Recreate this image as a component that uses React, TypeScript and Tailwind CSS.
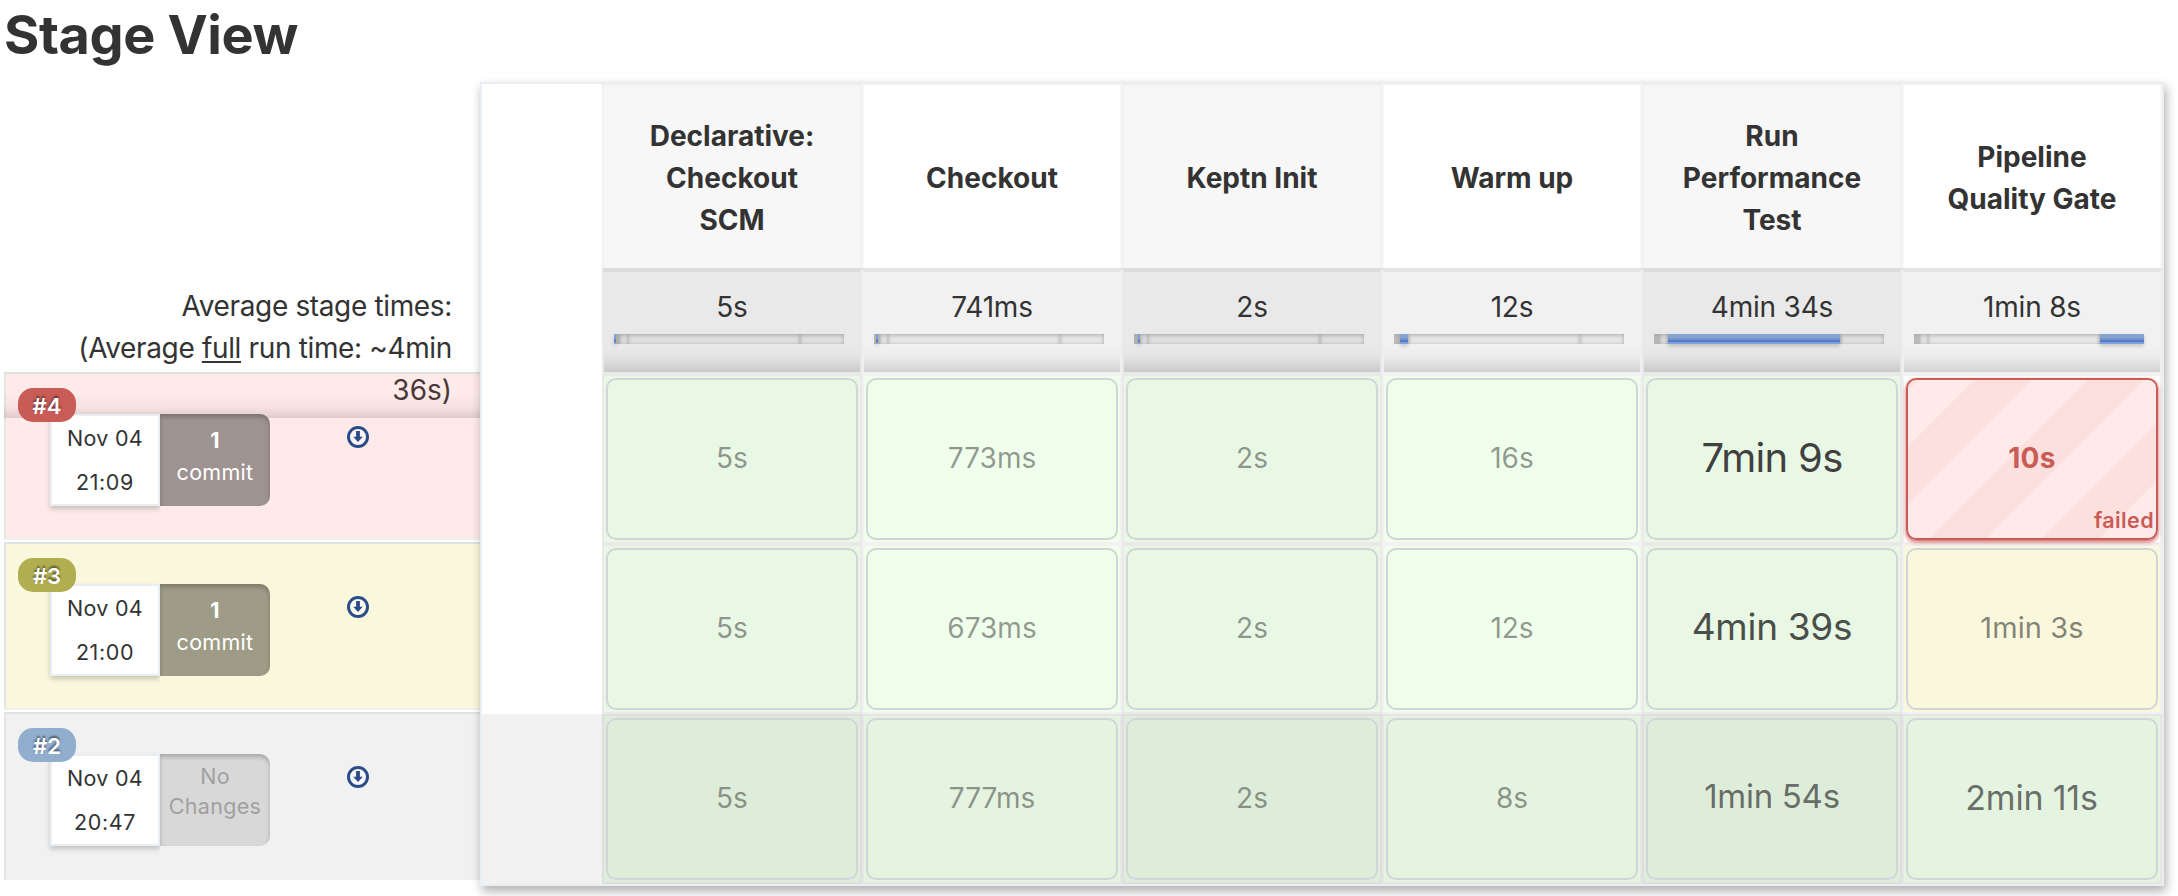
import React from "react";

type Stage = { name: string[]; avg: string; from: number; to: number };

const stages: Stage[] = [
  { name: ["Declarative:", "Checkout", "SCM"], avg: "5s", from: 0, to: 2 },
  { name: ["Checkout"], avg: "741ms", from: 2, to: 4 },
  { name: ["Keptn Init"], avg: "2s", from: 4, to: 6 },
  { name: ["Warm up"], avg: "12s", from: 6, to: 14 },
  { name: ["Run", "Performance", "Test"], avg: "4min 34s", from: 14, to: 186 },
  { name: ["Pipeline", "Quality Gate"], avg: "1min 8s", from: 186, to: 230 },
];

type Cell = { text: string; style?: string; state?: "ok" | "failed" | "unstable" };
type Run = {
  id: string;
  badge: string;
  row: string;
  date: string;
  time: string;
  commits: number;
  changes: string;
  shaded?: boolean;
  cells: Cell[];
};

const small = "text-[28px] text-[#333]/50 pb-0.5";

const runs: Run[] = [
  {
    id: "#4",
    badge: "bg-[#c95c56]",
    row: "bg-[#feebe9] border-b-[#f0f0f0]",
    date: "Nov 04",
    time: "21:09",
    commits: 1,
    changes: "bg-[#9e9390]",
    cells: [
      { text: "5s" },
      { text: "773ms" },
      { text: "2s" },
      { text: "16s" },
      { text: "7min 9s", style: "text-[40px] text-[#404040] tracking-[-0.7px] pb-0.5" },
      { text: "10s", style: "text-[28px] font-bold text-[#c95c56] tracking-[0.3px] pb-0.5", state: "failed" },
    ],
  },
  {
    id: "#3",
    badge: "bg-[#b0ae50]",
    row: "bg-[#faf8dc] border-b-[#f0f0f0]",
    date: "Nov 04",
    time: "21:00",
    commits: 1,
    changes: "bg-[#9e9c87]",
    cells: [
      { text: "5s" },
      { text: "673ms" },
      { text: "2s" },
      { text: "12s" },
      { text: "4min 39s", style: "text-[37px] text-[#4b4f4a] tracking-[-0.3px] pb-1" },
      { text: "1min 3s", style: "text-[29px] text-[#333]/60 tracking-[0.1px] pb-0.5", state: "unstable" },
    ],
  },
  {
    id: "#2",
    badge: "bg-[#91aece]",
    row: "bg-[#f1f1f1] border-b-[#f1f1f1]",
    date: "Nov 04",
    time: "20:47",
    commits: 0,
    changes: "bg-[#d8d8d8]",
    shaded: true,
    cells: [
      { text: "5s" },
      { text: "777ms" },
      { text: "2s" },
      { text: "8s" },
      { text: "1min 54s", style: "text-[33px] text-[#333]/70 tracking-[-0.3px] pb-1" },
      { text: "2min 11s", style: "text-[34px] text-[#333]/70 tracking-[-0.2px] pb-[3px] pr-px" },
    ],
  },
];

function DownloadIcon() {
  return (
    <svg width="22" height="22" viewBox="0 0 22 22" className="block">
      <circle cx="11" cy="11" r="9.5" fill="#fff" fillOpacity="0.5" stroke="#2a4d87" strokeWidth="3" />
      <path d="M9.1 5h3.8v5.8h2.9L11 16 6.2 10.8h2.9z" fill="#2a4d87" />
    </svg>
  );
}

function BuildRow({ run }: { run: Run }) {
  return (
    <div className={`mb-0.5 flex h-[168px] border-2 border-r-0 border-l-[#e4e4e4] border-t-[#e2e2e2] ${run.row}`}>
      <div
        className={`relative z-30 ml-3 mt-3.5 flex h-[34px] w-[58px] items-center justify-center rounded-[15px] pt-0.5 text-[22px] font-semibold text-white [text-shadow:0_-2px_2px_rgba(0,0,0,0.5)] ${run.badge}`}
      >
        {run.id}
      </div>
      <div className="relative z-20 -ml-[26px] mt-10 flex h-[92px] w-[110px] flex-col items-center justify-center border-2 border-[#e8eef1] bg-white text-[21.5px] leading-[44px] tracking-[0.3px] text-[#333] shadow-[0_3px_5px_rgba(0,0,0,0.2)] [clip-path:inset(-4px_0_-12px_-10px)]">
        <div>{run.date}</div>
        <div className="tracking-[0.6px]">{run.time}</div>
      </div>
      <div
        className={`relative z-20 mt-10 flex h-[92px] w-[110px] flex-col items-center rounded-r-[10px] text-[21.5px] tracking-[0.3px] shadow-[inset_0_3px_4px_rgba(0,0,0,0.22)] ${run.changes}`}
      >
        {run.commits > 0 ? (
          <>
            <div className="pt-[10px] font-bold leading-8 text-white">{run.commits}</div>
            <div className="leading-8 text-white">commit</div>
          </>
        ) : (
          <>
            <div className="pt-[7px] leading-[30px] text-[#a0a0a0]">No</div>
            <div className="leading-[30px] text-[#a0a0a0]">Changes</div>
          </>
        )}
      </div>
      <div className="ml-[77px] mt-[52px]">
        <DownloadIcon />
      </div>
    </div>
  );
}

function StageBar({ index }: { index: number }) {
  return (
    <div className="flex h-[10px] w-[230px]">
      {stages.map((s, i) => (
        <div
          key={i}
          style={{ width: s.to - s.from }}
          className={
            i === index
              ? "bg-[linear-gradient(#86a4d0_0,#86a4d0_35%,#4a70c4_80%,#7fa3d9_80%)] shadow-[0_2px_4px_rgba(0,0,0,0.2)]"
              : "bg-[#333]/5 shadow-[inset_0_1px_4px_rgba(0,0,0,0.28)]"
          }
        />
      ))}
    </div>
  );
}

function CellBox({ cell }: { cell: Cell }) {
  const failed = cell.state === "failed";
  return (
    <div
      className={`relative flex h-[162px] w-[252px] items-center justify-center rounded-[10px] border-2 ${
        failed
          ? "border-[#c95c56] bg-[repeating-linear-gradient(-45deg,#feebe9_0,#feebe9_40px,#fce0dd_40px,#fce0dd_80px)] shadow-[0_2px_4px_rgba(201,70,66,0.85)]"
          : "border-[#d1d5d9]"
      }`}
    >
      <span className={cell.style ?? small}>{cell.text}</span>
      {failed && (
        <span className="absolute bottom-[2px] right-[2px] text-[21.5px] font-semibold leading-8 tracking-[0.4px] text-[#c95c56]">
          failed
        </span>
      )}
    </div>
  );
}

function cellColor(cell: Cell, odd: boolean, shaded?: boolean) {
  if (cell.state === "failed") return "bg-white";
  if (cell.state === "unstable") return "bg-[#faf8dc]";
  if (shaded) return odd ? "bg-[#deedda]" : "bg-[#e4f4e0]";
  return odd ? "bg-[#e9f8e5]" : "bg-[#f0ffec]";
}

function cellBorder(odd: boolean, shaded?: boolean) {
  if (shaded) return odd ? "border-[#dedede]" : "border-[#e5e5e5]";
  return odd ? "border-[#e9e9e9]" : "border-[#f1f1f1]";
}

export default function App() {
  return (
    <div className="h-[896px] w-[2178px] overflow-hidden bg-white font-['Inter','Liberation_Sans',sans-serif] text-[#333]">
      <h1 className="h-[82px] pl-1 text-[54px] font-bold leading-[69px] tracking-[-0.4px]">Stage View</h1>
      <div className="flex">
        <div className="w-[480px] shrink-0 pl-1 pt-[184px]">
          <div className="relative z-10 -mb-[46px] h-[152px] bg-[linear-gradient(transparent_128px,rgba(60,40,40,0.05)_142px,rgba(60,40,40,0.16)_152px)] pl-10 pr-7 pt-[19px] text-right text-[28px] leading-[42px]">
            <div className="tracking-[-0.35px]">Average stage times:</div>
            <div className="tracking-[-0.35px]">
              (Average <span className="underline decoration-2 underline-offset-[3px]">full</span> run time: ~4min
            </div>
            <div className="text-[#4a3838]">36s)</div>
          </div>
          {runs.map((r) => (
            <BuildRow key={r.id} run={r} />
          ))}
        </div>
        <div className="relative z-30 h-[804px] w-[1684px] shrink-0 border-2 border-[#e8eef2] bg-white shadow-[2px_5px_10px_rgba(0,0,0,0.32)]">
          <div className="flex h-[184px] pl-[120px]">
            {stages.map((s, i) => (
              <div
                key={i}
                className={`flex w-[260px] flex-col items-center justify-center border-2 border-b-0 pt-0.5 text-[28px] font-[650] leading-[42px] ${
                  i % 2 ? "border-x-[#f7f7f7] border-t-[#f8f8f8] bg-white" : "border-[#f1f1f1] bg-[#f7f7f7]"
                }`}
              >
                {s.name.map((n) => (
                  <div key={n}>{n}</div>
                ))}
              </div>
            ))}
          </div>
          <div className="flex h-[106px] pl-[120px]">
            {stages.map((s, i) => (
              <div
                key={i}
                className={`flex w-[260px] flex-col items-center border-x-2 border-b-2 border-t-4 pt-[14px] ${
                  i % 2
                    ? "border-[#f0f0f0] border-t-[#e3e3e3] bg-[linear-gradient(#f1f1f1_76%,#eaeaea_86%,#d2d2d2)]"
                    : "border-[#e9e9e9] border-t-[#dcdcdc] bg-[linear-gradient(#e9e9e9_76%,#e2e2e2_86%,#cacaca)]"
                }`}
              >
                <div className="text-[28px] leading-[42px] tracking-[-0.2px]">{s.avg}</div>
                <div className="ml-2.5 mt-1.5 w-[230px] self-start">
                  <StageBar index={i} />
                </div>
              </div>
            ))}
          </div>
          {runs.map((r) => (
            <div key={r.id} className={`flex h-[170px] pl-[120px] ${r.shaded ? "bg-[#f1f1f1]" : "bg-white"}`}>
              {r.cells.map((c, i) => (
                <div
                  key={i}
                  className={`w-[260px] border-2 p-0.5 ${cellBorder(i % 2 === 0, r.shaded)} ${cellColor(c, i % 2 === 0, r.shaded)}`}
                >
                  <CellBox cell={c} />
                </div>
              ))}
            </div>
          ))}
        </div>
      </div>
    </div>
  );
}
